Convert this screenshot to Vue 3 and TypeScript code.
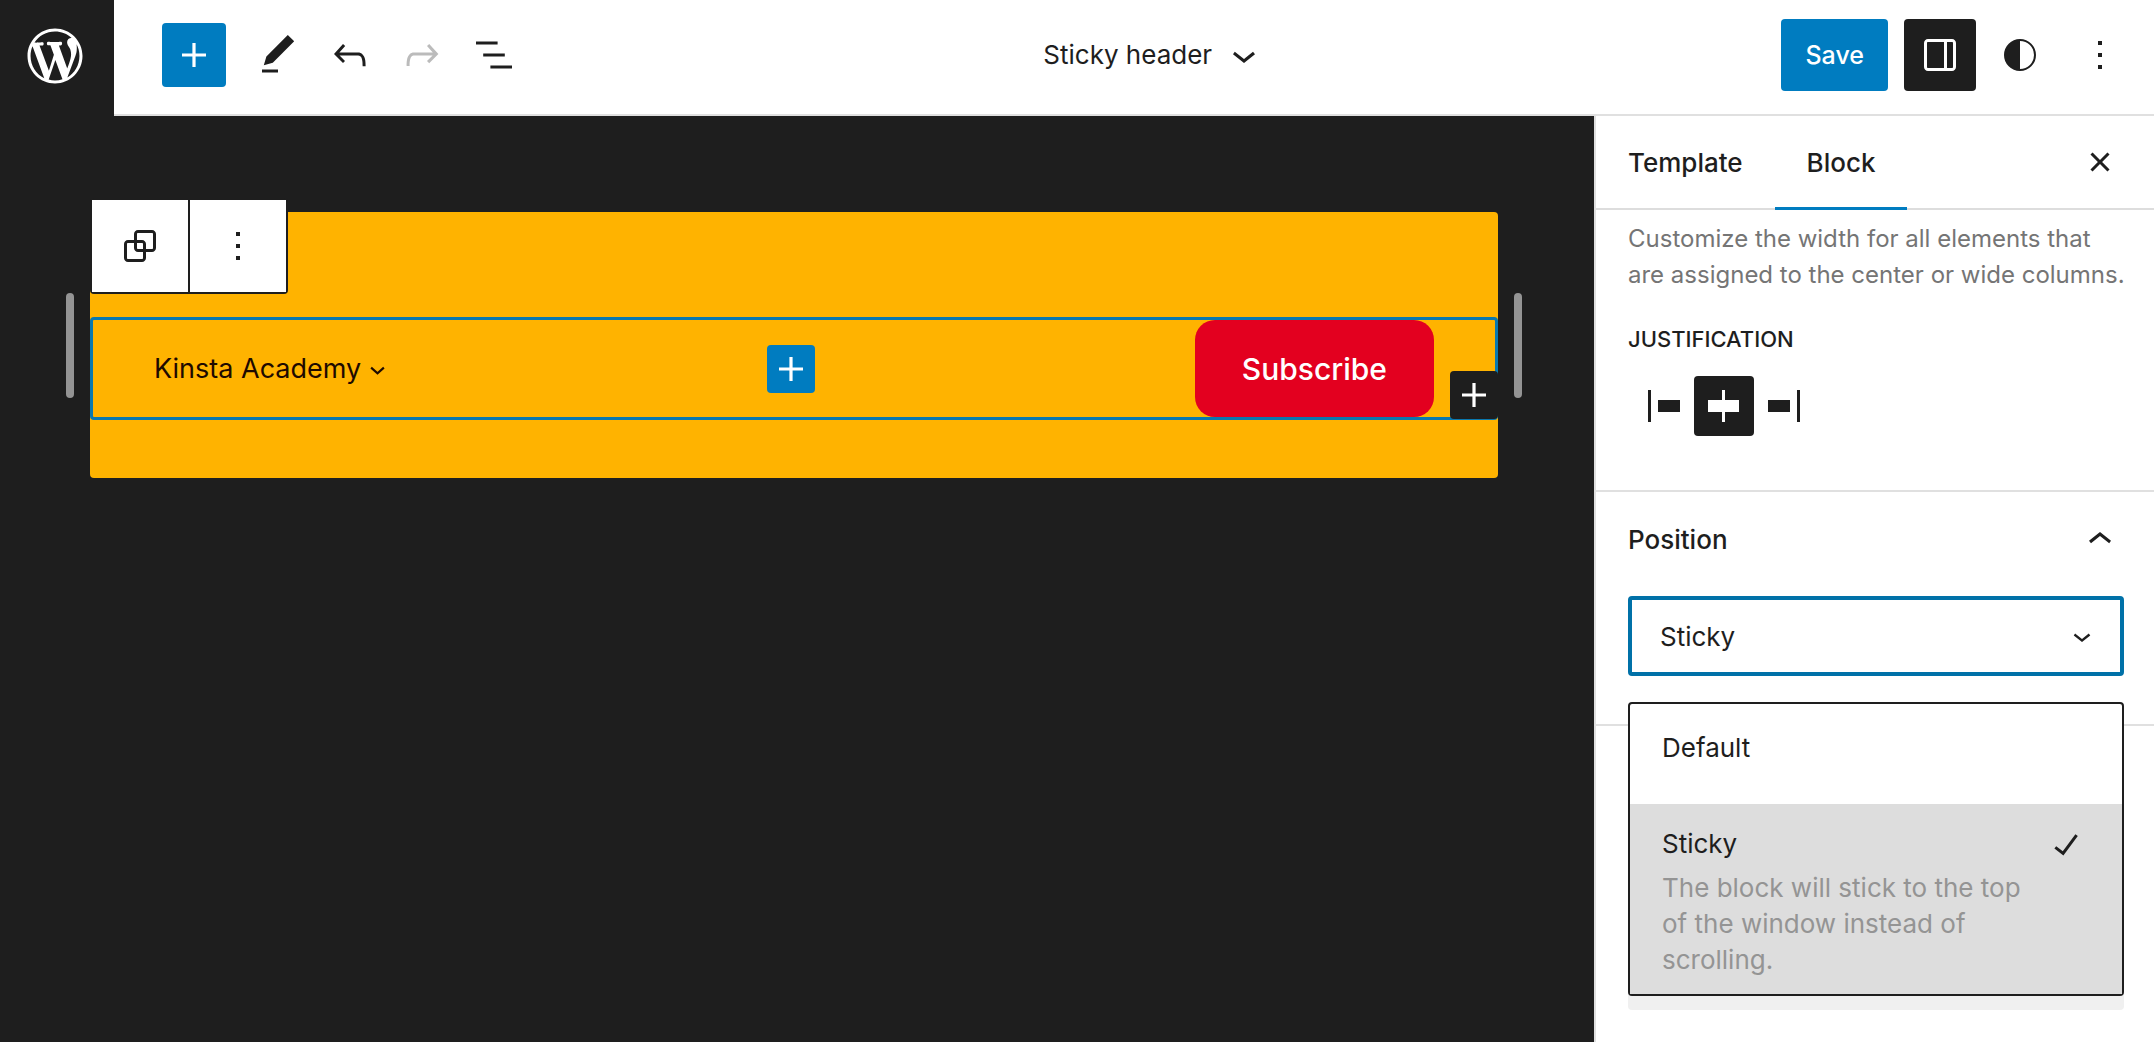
<script setup lang="ts">
import { ref } from 'vue'

type Justify = 'left' | 'center' | 'right'

const icons = {
  plus: 'M18 11.2h-5.2V6h-1.6v5.2H6v1.6h5.2V18h1.6v-5.2H18z',
  edit: 'M20.1 5.1L16.9 2 6.2 12.7l-1.3 4.4 4.5-1.2L20.1 5.1zM4 20.8h8v-1.5H4v1.5z',
  undo: 'M18.3 11.7c-.6-.6-1.4-.9-2.3-.9H6.7l2.9-3.3-1.1-1-4.5 5L8.5 16l1-1-2.7-2.7H16c.5 0 .9.2 1.3.5 1 1 1 3.4 1 4.5v.3h1.5v-.2c0-1.5 0-4.3-1.5-5.7z',
  redo: 'M15.6 6.5l-1.1 1 2.9 3.3H8c-.9 0-1.7.3-2.3.9-1.4 1.5-1.4 4.2-1.4 5.6v.2h1.5v-.3c0-1.1 0-3.5 1-4.5.3-.3.7-.5 1.3-.5h9.2L14.5 15l1.1 1.1 4.6-4.6-4.6-5z',
  list: 'M13.8 5.2H3v1.5h10.8V5.2zm-3.6 12v1.5H21v-1.5H10.2zm7.2-6H6.6v1.5h10.8v-1.5z',
  chevronDown: 'M17.5 11.6L12 16l-5.5-4.4.9-1.2L12 14l4.5-3.6 1 1.2z',
  chevronUp: 'M6.5 12.4L12 8l5.5 4.4-.9 1.2L12 10l-4.5 3.6-1-1.2z',
  drawer: 'M18 4H6c-1.1 0-2 .9-2 2v12c0 1.1.9 2 2 2h12c1.1 0 2-.9 2-2V6c0-1.1-.9-2-2-2zm-4 14.5H6c-.3 0-.5-.2-.5-.5V6c0-.3.2-.5.5-.5h8v13zm4.5-.5c0 .3-.2.5-.5.5h-2.5v-13H18c.3 0 .5.2.5.5v12z',
  styles: 'M12 4a8 8 0 1 0 0 16 8 8 0 0 0 0-16zm0 1a7 7 0 0 1 0 14V5z',
  more: 'M13 19h-2v-2h2v2zm0-6h-2v-2h2v2zm0-6h-2V5h2v2z',
  close: 'M12 13.06l3.712 3.713 1.061-1.06L13.061 12l3.712-3.712-1.06-1.06L12 10.938 8.288 7.227l-1.061 1.06L10.939 12l-3.712 3.712 1.06 1.061L12 13.061z',
  group: 'M18 4h-7c-1.1 0-2 .9-2 2v3H6c-1.1 0-2 .9-2 2v7c0 1.1.9 2 2 2h7c1.1 0 2-.9 2-2v-3h3c1.1 0 2-.9 2-2V6c0-1.1-.9-2-2-2zm-4.5 14c0 .3-.2.5-.5.5H6c-.3 0-.5-.2-.5-.5v-7c0-.3.2-.5.5-.5h3V13c0 1.1.9 2 2 2h2.5v3zm0-4.5H11c-.3 0-.5-.2-.5-.5v-2.5H13c.3 0 .5.2.5.5v2.5zm5-.5c0 .3-.2.5-.5.5h-3V11c0-1.1-.9-2-2-2h-2.5V6c0-.3.2-.5.5-.5h7c.3 0 .5.2.5.5v7z',
  check: 'M16.7 7.1l-6.3 8.5-3.3-2.5-.9 1.2 4.5 3.4L17.9 8z',
}

const justifyOptions: { value: Justify; label: string; path: string }[] = [
  { value: 'left', label: 'Justify items left', path: 'M9 9v6h11V9H9zM4 20h1.5V4H4v16z' },
  { value: 'center', label: 'Justify items center', path: 'M12.5 15v5H11v-5H4V9h7V4h1.5v5h7v6h-7Z' },
  { value: 'right', label: 'Justify items right', path: 'M4 15h11V9H4v6zM18.5 4v16H20V4h-1.5z' },
]

const positionOptions = [
  { value: 'Default', hint: '' },
  { value: 'Sticky', hint: 'The block will stick to the top of the window instead of scrolling.' },
]

const justification = ref<Justify>('center')
const position = ref('Sticky')
</script>

<template>
  <div class="editor">
    <header class="topbar">
      <a class="logo" href="#" aria-label="WordPress">
        <svg viewBox="-2 -2 24 24"><path d="M20 10c0-5.51-4.49-10-10-10C4.48 0 0 4.49 0 10c0 5.52 4.48 10 10 10 5.51 0 10-4.48 10-10zM7.78 15.37L4.37 6.22c.55-.02 1.17-.08 1.17-.08.5-.06.44-1.13-.06-1.11 0 0-1.45.11-2.37.11-.18 0-.37 0-.58-.01C4.12 2.69 6.87 1.11 10 1.11c2.33 0 4.45.87 6.05 2.34-.68-.11-1.65.39-1.65 1.58 0 .74.45 1.36.9 2.1.35.61.55 1.36.55 2.46 0 1.49-1.4 5-1.4 5l-3.03-8.37c.54-.02.82-.17.82-.17.5-.05.44-1.25-.06-1.22 0 0-1.44.12-2.38.12-.87 0-2.33-.12-2.33-.12-.5-.03-.56 1.2-.06 1.22l.92.08 1.26 3.41zM17.41 10c.24-.64.74-1.87.43-4.25.7 1.29 1.05 2.71 1.05 4.25 0 3.29-1.73 6.24-4.4 7.78.97-2.59 1.94-5.2 2.92-7.78zM6.1 18.09C3.12 16.65 1.11 13.53 1.11 10c0-1.3.23-2.48.72-3.59C3.25 10.3 4.67 14.2 6.1 18.09zm4.03-6.63l2.58 6.98c-.86.29-1.76.45-2.71.45-.79 0-1.57-.11-2.29-.33.81-2.38 1.62-4.74 2.42-7.1z" /></svg>
      </a>
      <div class="bar">
        <div class="tools">
          <button class="inserter" aria-label="Toggle block inserter"><svg class="icon" viewBox="0 0 24 24"><path :d="icons.plus" /></svg></button>
          <div class="tool-set">
            <button class="tool" aria-label="Tools"><svg class="icon" viewBox="0 0 24 24"><path :d="icons.edit" /></svg></button>
            <button class="tool" aria-label="Undo"><svg class="icon" viewBox="0 0 24 24"><path :d="icons.undo" /></svg></button>
            <button class="tool" aria-label="Redo" disabled><svg class="icon" viewBox="0 0 24 24"><path :d="icons.redo" /></svg></button>
            <button class="tool" aria-label="List view"><svg class="icon" viewBox="0 0 24 24"><path :d="icons.list" /></svg></button>
          </div>
        </div>
        <button class="doc-title">
          <span>Sticky header</span>
          <svg class="icon" viewBox="0 0 24 24"><path :d="icons.chevronDown" /></svg>
        </button>
        <div class="actions">
          <button class="save">Save</button>
          <button class="tool pressed" aria-label="Settings"><svg class="icon" viewBox="0 0 24 24"><path :d="icons.drawer" /></svg></button>
          <button class="tool" aria-label="Styles"><svg class="icon" viewBox="0 0 24 24"><path :d="icons.styles" /></svg></button>
          <button class="tool" aria-label="Options"><svg class="icon" viewBox="0 0 24 24"><path :d="icons.more" /></svg></button>
        </div>
      </div>
    </header>

    <div class="body">
      <main class="canvas">
        <div class="frame">
          <span class="handle"></span>
          <section class="part">
            <div class="row">
              <a class="nav-item" href="#">
                <span>Kinsta Academy</span>
                <svg viewBox="0 0 12 12"><path d="M1.5 4L6 8l4.5-4" /></svg>
              </a>
              <button class="add-inline" aria-label="Add block"><svg class="icon" viewBox="0 0 24 24"><path :d="icons.plus" /></svg></button>
              <button class="subscribe">Subscribe</button>
              <button class="appender" aria-label="Append block"><svg class="icon" viewBox="0 0 24 24"><path :d="icons.plus" /></svg></button>
            </div>
            <div class="block-toolbar" role="toolbar" aria-label="Block tools">
              <button aria-label="Group"><svg class="icon" viewBox="0 0 24 24"><path :d="icons.group" /></svg></button>
              <button aria-label="Options"><svg class="icon" viewBox="0 0 24 24"><path :d="icons.more" /></svg></button>
            </div>
          </section>
          <span class="handle"></span>
        </div>
      </main>

      <aside class="sidebar">
        <div class="tabs">
          <button class="tab">Template</button>
          <button class="tab active">Block</button>
          <button class="tool close" aria-label="Close settings"><svg class="icon" viewBox="0 0 24 24"><path :d="icons.close" /></svg></button>
        </div>

        <section class="panel layout">
          <p class="hint">Customize the width for all elements that are assigned to the center or wide columns.</p>
          <h3 id="justify-label">Justification</h3>
          <div class="justify" role="group" aria-labelledby="justify-label">
            <button
              v-for="option in justifyOptions"
              :key="option.value"
              :class="{ pressed: justification === option.value }"
              :aria-label="option.label"
              :aria-pressed="justification === option.value"
              @click="justification = option.value"
            >
              <svg class="icon" viewBox="0 0 24 24"><path :d="option.path" /></svg>
            </button>
          </div>
        </section>

        <section class="panel position">
          <div class="panel-title">
            <label for="position-select">Position</label>
            <button aria-label="Collapse panel"><svg class="icon" viewBox="0 0 24 24"><path :d="icons.chevronUp" /></svg></button>
          </div>
          <div class="select-wrap">
            <select id="position-select" v-model="position">
              <option v-for="option in positionOptions" :key="option.value">{{ option.value }}</option>
            </select>
            <svg class="select-arrow" viewBox="0 0 24 24"><path :d="icons.chevronDown" /></svg>
            <ul class="menu" role="listbox" aria-label="Position">
              <li
                v-for="option in positionOptions"
                :key="option.value"
                role="option"
                :class="{ selected: position === option.value }"
                :aria-selected="position === option.value"
                @click="position = option.value"
              >
                <span class="option-text">
                  <span>{{ option.value }}</span>
                  <span v-if="option.hint" class="option-hint">{{ option.hint }}</span>
                </span>
                <svg v-if="position === option.value" class="icon" viewBox="0 0 24 24"><path :d="icons.check" /></svg>
              </li>
            </ul>
          </div>
        </section>
      </aside>
    </div>
  </div>
</template>

<style>
body {
  margin: 0;
  background: #1e1e1e;
}
</style>

<style scoped>
.editor {
  display: flex;
  flex-direction: column;
  min-height: 100vh;
  font-family: Inter, "Liberation Sans", sans-serif;
  font-size: 26px;
  line-height: 36px;
  color: #1e1e1e;
  background: #1e1e1e;
}
* {
  box-sizing: border-box;
}
button {
  display: flex;
  align-items: center;
  justify-content: center;
  margin: 0;
  padding: 0;
  border: 0;
  background: none;
  color: inherit;
  font: inherit;
  cursor: pointer;
}
svg {
  display: block;
  flex: none;
  fill: currentColor;
}
.icon {
  width: 48px;
  height: 48px;
}

.topbar {
  display: flex;
  height: 116px;
}
.logo {
  display: flex;
  align-items: center;
  justify-content: center;
  width: 114px;
  padding: 0 4px 4px 0;
  color: #fff;
}
.logo svg {
  width: 66px;
  height: 66px;
}
.bar {
  flex: 1;
  display: flex;
  align-items: center;
  justify-content: space-between;
  padding: 0 18px 4px 48px;
  background: #fff;
  border-bottom: 2px solid #e0e0e0;
}
.tools {
  display: flex;
  align-items: center;
  gap: 16px;
}
.tool-set {
  display: flex;
}
.inserter {
  width: 64px;
  height: 64px;
  border-radius: 4px;
  background: #007cc0;
  color: #fff;
}
.tool {
  width: 72px;
  height: 72px;
  border-radius: 4px;
}
.tool:disabled {
  color: #bbb;
}
.pressed {
  background: #1e1e1e;
  color: #fff;
}
.doc-title {
  gap: 8px;
}
.actions {
  display: flex;
  gap: 8px;
}
.save {
  height: 72px;
  margin-right: 8px;
  padding: 0 24px;
  border-radius: 4px;
  background: #007cc0;
  color: #fff;
  font-size: 25px;
  font-weight: 500;
}

.body {
  flex: 1;
  display: flex;
}
.canvas {
  flex: 1;
  padding: 96px 72px 0 66px;
}
.frame {
  display: flex;
  gap: 16px;
}
.handle {
  width: 8px;
  height: 105px;
  margin-top: 81px;
  border-radius: 4px;
  background: #949494;
}
.part {
  position: relative;
  flex: 1;
  padding: 105px 0 58px;
  border-radius: 4px;
  background: #ffb300;
}
.row {
  position: relative;
  display: flex;
  align-items: center;
  justify-content: space-between;
  padding: 0 61px;
  border: 3px solid #0a78ae;
  border-radius: 4px;
}
.nav-item {
  display: flex;
  align-items: center;
  gap: 8px;
  color: #1e0a00;
  font-size: 27px;
  text-decoration: none;
}
.nav-item svg {
  width: 17px;
  height: 17px;
  margin-top: 4px;
  fill: none;
  stroke: currentColor;
  stroke-width: 1.5;
}
.add-inline,
.appender {
  width: 48px;
  height: 48px;
  border-radius: 4px;
  background: #007cc0;
  color: #fff;
}
.appender {
  position: absolute;
  right: -3px;
  bottom: -2px;
  background: #1e1e1e;
}
.subscribe {
  height: 97px;
  padding: 0 47px;
  border-radius: 20px;
  background: #e3001f;
  color: #fff;
  font-size: 30px;
  font-weight: 500;
}
.block-toolbar {
  position: absolute;
  top: -14px;
  left: 0;
  display: flex;
  gap: 2px;
  padding: 2px;
  border-radius: 4px;
  background: #1e1e1e;
}
.block-toolbar button {
  width: 96px;
  height: 92px;
  background: #fff;
}

.sidebar {
  width: 560px;
  background: #fff;
  border-left: 2px solid #e0e0e0;
}
.tabs {
  display: flex;
  height: 94px;
  padding-right: 18px;
  border-bottom: 2px solid #ddd;
  font-weight: 500;
}
.tab {
  height: 94px;
  padding: 0 32px;
}
.tab.active {
  box-shadow: inset 0 -3px #007cc0;
}
.close {
  align-self: center;
  margin-left: auto;
}
.panel {
  padding: 0 30px 0 32px;
  border-bottom: 2px solid #e0e0e0;
}
.layout {
  padding-top: 11px;
  padding-bottom: 54px;
}
.hint {
  margin: 0 -4px 0 0;
  color: #757575;
  font-size: 24px;
}
h3 {
  margin: 28px 0 0;
  font-size: 22px;
  font-weight: 500;
  text-transform: uppercase;
}
.justify {
  display: flex;
  margin-top: 19px;
  padding-left: 6px;
}
.justify button {
  width: 60px;
  height: 60px;
  border-radius: 4px;
}
.position {
  padding-bottom: 48px;
}
.panel-title {
  display: flex;
  align-items: center;
  justify-content: space-between;
  height: 96px;
  font-weight: 500;
}
.select-wrap {
  position: relative;
  margin-top: 8px;
}
select {
  display: block;
  width: 100%;
  height: 80px;
  margin: 0;
  padding: 2px 28px 0;
  appearance: none;
  border: 4px solid #0071a8;
  border-radius: 4px;
  outline: 0;
  background: #fff;
  color: inherit;
  font: inherit;
}
.select-arrow {
  position: absolute;
  top: 22px;
  right: 24px;
  width: 36px;
  height: 36px;
  pointer-events: none;
}
.menu {
  position: absolute;
  top: 106px;
  left: 0;
  right: 0;
  margin: 0;
  padding: 0;
  border: 2px solid #1e1e1e;
  border-radius: 4px;
  background: #fff;
  box-shadow: 0 14px #f0f0f0;
  list-style: none;
}
.menu li {
  display: flex;
  align-items: flex-start;
  justify-content: space-between;
  min-height: 100px;
  padding: 26px 32px 16px;
}
.menu li.selected {
  padding-top: 22px;
  background: #ddd;
}
.menu .icon {
  margin-top: -6px;
}
.option-text {
  display: flex;
  flex-direction: column;
  gap: 8px;
}
.option-hint {
  max-width: 370px;
  color: #949494;
}
</style>
